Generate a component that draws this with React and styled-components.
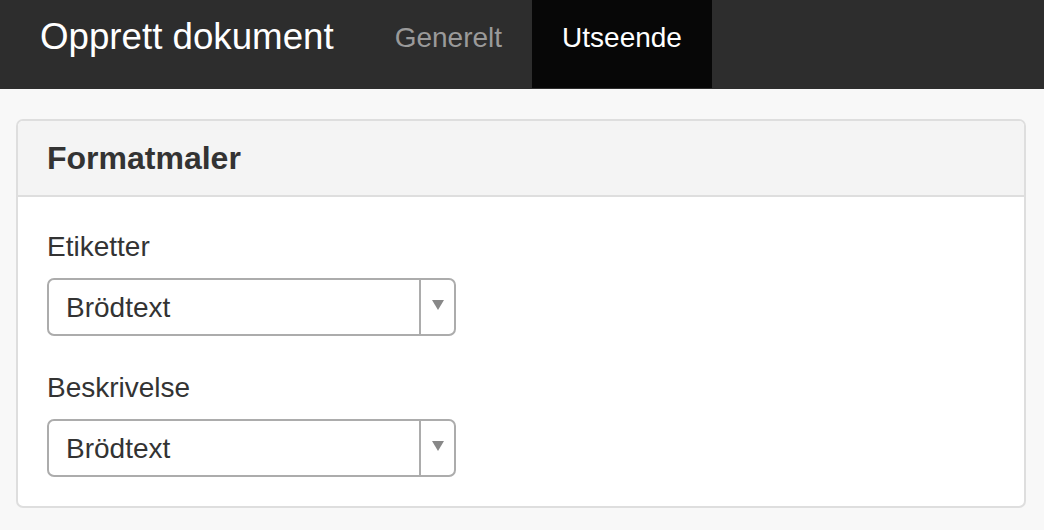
import React from 'react'
import styled, { createGlobalStyle } from 'styled-components'

const GlobalStyle = createGlobalStyle`
  html, body {
    margin: 0;
    padding: 0;
    background: #f8f8f8;
    font-family: "Liberation Sans", Arial, sans-serif;
    color: #333;
  }
`

const Navbar = styled.nav`
  display: flex;
  align-items: flex-start;
  height: 89px;
  background: #2d2d2d;
  padding-left: 40px;
`

const Brand = styled.div`
  display: flex;
  align-items: center;
  height: 88px;
  padding-bottom: 14px;
  box-sizing: border-box;
  font-size: 36.7px;
  line-height: 40px;
  color: #fff;
  margin-right: 31px;
`

const Tab = styled.a`
  display: flex;
  align-items: center;
  box-sizing: border-box;
  height: 88px;
  padding: 0 30px 12px;
  font-size: 28px;
  line-height: 32px;
  color: ${p => (p.$active ? '#fff' : '#9a9a9a')};
  background: ${p => (p.$active ? '#070707' : 'transparent')};
  text-decoration: none;
`

const Page = styled.main`
  padding: 30px 18px 21px 16px;
`

const Panel = styled.section`
  border: 2px solid #dedede;
  border-radius: 7px;
  background: #fff;
  overflow: hidden;
`

const PanelHeader = styled.header`
  height: 74px;
  display: flex;
  align-items: center;
  padding: 0 29px;
  background: #f4f4f4;
  border-bottom: 2px solid #dedede;
`

const PanelTitle = styled.h2`
  margin: 0;
  font-size: 32px;
  line-height: 36px;
  font-weight: 700;
  color: #333;
`

const PanelBody = styled.div`
  padding: 34px 29px 29px;
  display: flex;
  flex-direction: column;
  gap: 36px;
`

const Field = styled.div`
  display: flex;
  flex-direction: column;
  gap: 15px;
`

const Label = styled.label`
  font-size: 28px;
  color: #333;
  line-height: 32px;
`

const Select = styled.div`
  display: flex;
  width: 409px;
  height: 58px;
  box-sizing: border-box;
  border: 2px solid #acacac;
  border-radius: 7px;
  background: #fff;
`

const Value = styled.div`
  flex: 1;
  display: flex;
  align-items: center;
  padding-left: 17px;
  font-size: 28px;
  line-height: 32px;
  color: #333;
  padding-top: 2px;
`

const Toggle = styled.div`
  width: 35px;
  border-left: 2px solid #acacac;
  display: flex;
  justify-content: center;
  padding-top: 20px;
  box-sizing: border-box;
`

const Arrow = () => (
  <svg width="12" height="10" viewBox="0 0 12 10">
    <path d="M0 0 H12 L6 10 Z" fill="#888" />
  </svg>
)

const SelectField = ({ label, value }) => (
  <Field>
    <Label>{label}</Label>
    <Select>
      <Value>{value}</Value>
      <Toggle>
        <Arrow />
      </Toggle>
    </Select>
  </Field>
)

export default function App() {
  return (
    <>
      <GlobalStyle />
      <Navbar>
        <Brand>Opprett dokument</Brand>
        <Tab href="#">Generelt</Tab>
        <Tab href="#" $active>Utseende</Tab>
      </Navbar>
      <Page>
        <Panel>
          <PanelHeader>
            <PanelTitle>Formatmaler</PanelTitle>
          </PanelHeader>
          <PanelBody>
            <SelectField label="Etiketter" value="Brödtext" />
            <SelectField label="Beskrivelse" value="Brödtext" />
          </PanelBody>
        </Panel>
      </Page>
    </>
  )
}
